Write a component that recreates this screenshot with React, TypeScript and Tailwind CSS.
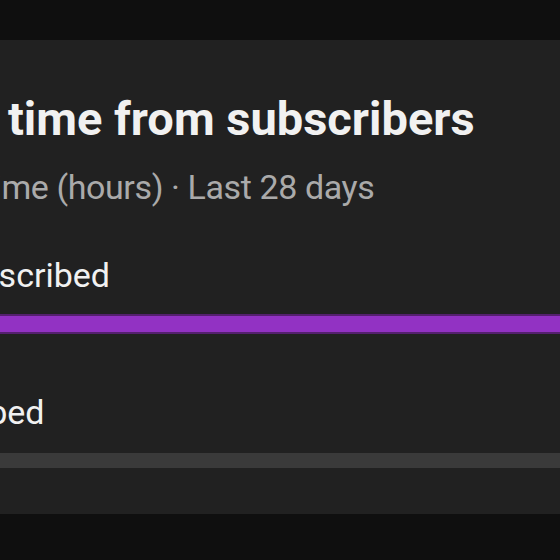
const rows = [
  { label: 'Not subscribed', bar: 'purple' as const },
  { label: 'Subscribed', bar: 'gray' as const },
];

export default function App() {
  return (
    <div className="h-[560px] w-[560px] overflow-hidden bg-[#0f0f0f] font-['Roboto','Noto_Sans',sans-serif]">
      <div className="h-[40px]" />
      <section className="bg-[#212121] pt-[51px] pb-[46px]">
        <h2 className="-ml-[136px] whitespace-nowrap text-[47px] font-bold leading-[56px] text-[#f1f1f1]">
          Watch time from subscribers
        </h2>
        <p className="mt-[18px] -ml-[119px] whitespace-nowrap text-[34px] leading-[44px] tracking-[-0.4px] text-[#aaaaaa]">
          Watch time (hours) · Last 28 days
        </p>

        <div className="mt-[44px] -ml-[120px] whitespace-nowrap text-[34px] leading-[44px] text-[#f1f1f1]">
          {rows[0].label}
        </div>
        <div className="mt-[17px] h-[20px] border-y-2 border-[#55206f] bg-[#9232c3]" />

        <div className="mt-[56px] -ml-[125px] whitespace-nowrap text-[34px] leading-[44px] text-[#f1f1f1]">
          {rows[1].label}
        </div>
        <div className="mt-[19px] h-[15px] bg-[#3a3a3a]" />
      </section>
    </div>
  );
}
